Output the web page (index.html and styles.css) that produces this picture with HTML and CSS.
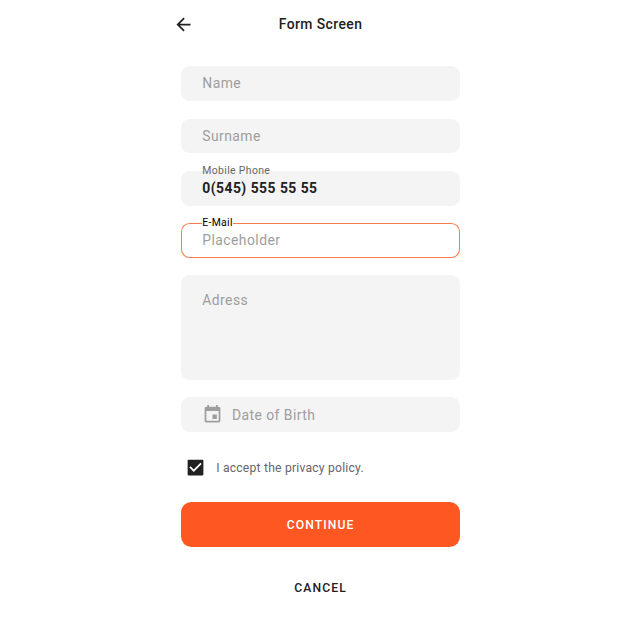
FILE: index.html
```html
<!DOCTYPE html>
<html lang="en">
<head>
<meta charset="utf-8">
<title>Form Screen</title>
<link rel="stylesheet" href="styles.css">
</head>
<body>
<main class="screen">
  <header class="header">
    <svg class="back" viewBox="0 0 24 24"><path d="M20 11H7.83l5.59-5.59L12 4l-8 8 8 8 1.41-1.41L7.83 13H20v-2z"/></svg>
    <h1 class="title">Form Screen</h1>
  </header>
  <form class="form">
    <div class="field"><span class="placeholder">Name</span></div>
    <div class="field"><span class="placeholder">Surname</span></div>
    <div class="field"><span class="label">Mobile Phone</span><span class="value">0(545) 555 55 55</span></div>
    <div class="field field-active"><span class="label">E-Mail</span><span class="placeholder">Placeholder</span></div>
    <div class="field field-area"><span class="placeholder">Adress</span></div>
    <div class="field">
      <svg class="calendar" viewBox="0 0 24 24"><path d="M17 12h-5v5h5v-5zM16 1v2H8V1H6v2H5c-1.11 0-1.99.9-1.99 2L3 19c0 1.1.89 2 2 2h14c1.1 0 2-.9 2-2V5c0-1.1-.9-2-2-2h-1V1h-2zm3 18H5V8h14v11z"/></svg>
      <span class="placeholder birth">Date of Birth</span>
    </div>
    <div class="accept">
      <svg class="checkbox" viewBox="0 0 24 24"><path d="M20 3H4c-.55 0-1 .45-1 1v16c0 .55.45 1 1 1h16c.55 0 1-.45 1-1V4c0-.55-.45-1-1-1zM10 17l-5-5 1.41-1.41L10 14.17l7.59-7.59L19 8l-9 9z"/></svg>
      <span class="policy">I accept the privacy policy.</span>
    </div>
    <div class="button primary"><span>CONTINUE</span></div>
    <div class="button secondary"><span>CANCEL</span></div>
  </form>
</main>
</body>
</html>
```
FILE: styles.css
```css
* { box-sizing: border-box; }
body {
  margin: 0;
  background: #fff;
  color: #212121;
  font-family: Roboto, "Liberation Sans", sans-serif;
}
.screen { width: 278.4px; margin: 0 auto; position: relative; left: 0.6px; }
.header {
  position: relative;
  height: 48px;
  display: flex;
  align-items: center;
  justify-content: center;
}
.back {
  position: absolute;
  left: -8.6px;
  top: 14px;
  width: 21px;
  height: 21px;
  fill: #212121;
}
.title {
  margin: 0;
  font-size: 13.9px;
  font-weight: 500;
  letter-spacing: 0.43px;
}
.form {
  display: flex;
  flex-direction: column;
  gap: 17.4px;
  padding-top: 18.4px;
}
.field {
  position: relative;
  display: flex;
  align-items: center;
  height: 34.8px;
  padding: 0 20.9px;
  border-radius: 8.7px;
  background: #f4f4f4;
}
.field:first-child { padding-bottom: 1px; }
.field-active { background: #fff; box-shadow: inset 0 0 0 1px #f77a50; }
.field-area { height: 104.4px; align-items: flex-start; padding-top: 16.9px; }
.placeholder { color: #9e9e9e; font-size: 13.9px; line-height: 16px; letter-spacing: 0.45px; }
.value { font-size: 13.9px; font-weight: 700; line-height: 16px; letter-spacing: 0.47px; }
.label {
  position: absolute;
  left: 20.9px;
  top: -5.9px;
  color: #666;
  font-size: 10.44px;
  line-height: 12px;
  letter-spacing: 0.35px;
}
.field-active .label { color: #000; background: #fff; letter-spacing: 0.3px; }
.calendar { width: 21px; height: 21px; margin-top: 1px; fill: #9e9e9e; }
.birth { margin-left: 8.7px; padding-top: 1px; }
.accept { display: flex; align-items: center; height: 21px; margin: 7.7px 0 6.4px 3.6px; }
.checkbox { width: 21px; height: 21px; fill: #212121; }
.policy { margin-left: 10.2px; padding-top: 1.4px; color: #666; font-size: 12.18px; letter-spacing: 0.2px; }
.button {
  display: flex;
  align-items: center;
  justify-content: center;
  height: 45px;
  padding-top: 1px;
  border-radius: 10.4px;
  font-size: 12.18px;
  font-weight: 500;
  letter-spacing: 1.08px;
}
.primary { background: #ff5722; color: #fff; }
.secondary { padding-top: 3px; color: #212121; }
```
